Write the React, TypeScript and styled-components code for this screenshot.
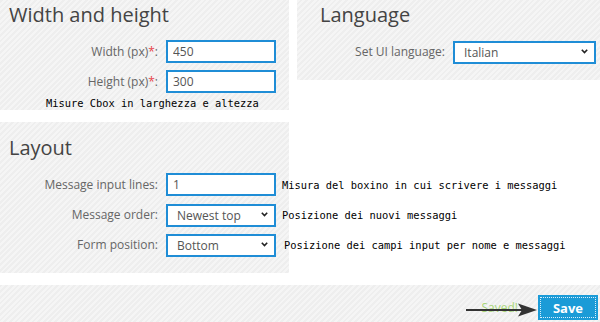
import React from "react";
import styled, { createGlobalStyle } from "styled-components";

const GlobalStyle = createGlobalStyle`
  html, body {
    margin: 0;
    padding: 0;
    background: #ffffff;
    overflow: hidden;
  }
  body {
    font-family: "Open Sans", "Liberation Sans", sans-serif;
  }
`;

const hatch = `repeating-linear-gradient(
  135deg,
  #f5f5f5 0px,
  #f5f5f5 2px,
  #eeeeee 2px,
  #eeeeee 4px
)`;

// the screenshot is cropped: panels start a little above and left of the window
const Page = styled.div`
  width: 614px;
  margin: -11px 0 0 -14px;
  display: flex;
  flex-direction: column;
  gap: 12px;
`;

const TopRow = styled.div`
  display: flex;
  align-items: flex-start;
  gap: 8px;
`;

const Panel = styled.section<{ $pb?: number }>`
  width: 303px;
  box-sizing: border-box;
  padding: 14px 4px ${(p) => (p.$pb ?? 17)}px 23px;
  background: ${hatch};
`;

const Title = styled.h2`
  margin: 0 0 13px;
  font-size: 20px;
  line-height: 24px;
  font-weight: 400;
  color: #444444;
`;

const Rows = styled.div`
  display: flex;
  flex-direction: column;
  gap: 7px;
`;

const Row = styled.div`
  display: flex;
  align-items: center;
  gap: 8px;
  height: 23px;
`;

const Label = styled.label<{ $w: number }>`
  flex: none;
  width: ${(p) => p.$w}px;
  text-align: right;
  font-size: 12px;
  color: #666666;
  white-space: nowrap;
`;

const Req = styled.span`
  color: #e8434a;
`;

const TextInput = styled.input`
  flex: none;
  box-sizing: border-box;
  width: 110px;
  height: 23px;
  margin: 0;
  padding: 0 5px;
  border: 2px solid #1f8dd6;
  background: #ffffff;
  font-family: "Open Sans", "Liberation Sans", sans-serif;
  font-size: 12px;
  color: #555555;
  outline: none;
`;

const SelectWrap = styled.div<{ $w: number }>`
  flex: none;
  position: relative;
  width: ${(p) => p.$w}px;
  height: 23px;
  svg {
    position: absolute;
    right: 8px;
    top: 9px;
    pointer-events: none;
  }
`;

const Select = styled.select`
  box-sizing: border-box;
  width: 100%;
  height: 23px;
  margin: 0;
  padding: 0 0 0 9px;
  border: 2px solid #1f8dd6;
  border-radius: 0;
  background: #ffffff;
  appearance: none;
  font-family: "Open Sans", "Liberation Sans", sans-serif;
  font-size: 12px;
  color: #555555;
  outline: none;
`;

const Note = styled.span<{ $shift?: number }>`
  flex: none;
  margin-left: ${(p) => p.$shift ?? 0}px;
  font-family: "DejaVu Sans Mono", monospace;
  font-size: 10.4px;
  color: #000000;
  white-space: nowrap;
`;

const PanelNote = styled.div`
  margin: 4px 0 0 37px;
  height: 13px;
  line-height: 13px;
  font-family: "DejaVu Sans Mono", monospace;
  font-size: 10.4px;
  color: #000000;
  white-space: nowrap;
`;

const Footer = styled.footer`
  position: relative;
  height: 40px;
  box-sizing: border-box;
  padding: 10px 2px 0 0;
  background: ${hatch};
  display: flex;
  justify-content: flex-end;
  align-items: flex-start;
  gap: 20px;
`;

const Saved = styled.span`
  margin-top: 4px;
  font-size: 12px;
  color: #a9d67a;
`;

const SaveButton = styled.button`
  width: 60px;
  height: 25px;
  padding: 0;
  border: none;
  background: #1b9bd7;
  color: #ffffff;
  font-family: "Open Sans", "Liberation Sans", sans-serif;
  font-size: 13px;
  font-weight: 700;
  outline: 1px dotted #d8eefa;
  outline-offset: -3px;
  cursor: pointer;
`;

const Arrow = styled.svg`
  position: absolute;
  right: 62px;
  top: 18px;
`;

const Chevron = () => (
  <svg width="7" height="5" viewBox="0 0 7 5">
    <path d="M0.8 0.8 L3.5 3.6 L6.2 0.8" fill="none" stroke="#222" strokeWidth="1.6" />
  </svg>
);

interface FieldProps {
  label: React.ReactNode;
  labelWidth: number;
  children: React.ReactNode;
}

const Field: React.FC<FieldProps> = ({ label, labelWidth, children }) => (
  <Row>
    <Label $w={labelWidth}>{label}</Label>
    {children}
  </Row>
);

const App: React.FC = () => {
  return (
    <>
      <GlobalStyle />
      <Page>
        <TopRow>
          <Panel $pb={0}>
            <Title>Width and height</Title>
            <Rows>
              <Field
                labelWidth={149}
                label={
                  <>
                    Width (px)<Req>*</Req>:
                  </>
                }
              >
                <TextInput defaultValue="450" />
              </Field>
              <Field
                labelWidth={149}
                label={
                  <>
                    Height (px)<Req>*</Req>:
                  </>
                }
              >
                <TextInput defaultValue="300" />
              </Field>
            </Rows>
            <PanelNote>Misure Cbox in larghezza e altezza</PanelNote>
          </Panel>
          <Panel>
            <Title>Language</Title>
            <Rows>
              <Field labelWidth={125} label="Set UI language:">
                <SelectWrap $w={143}>
                  <Select defaultValue="it">
                    <option value="it">Italian</option>
                    <option value="en">English</option>
                  </Select>
                  <Chevron />
                </SelectWrap>
              </Field>
            </Rows>
          </Panel>
        </TopRow>

        <Panel>
          <Title>Layout</Title>
          <Rows>
            <Field labelWidth={149} label="Message input lines:">
              <TextInput defaultValue="1" />
              <Note $shift={-2}>Misura del boxino in cui scrivere i messaggi</Note>
            </Field>
            <Field labelWidth={149} label="Message order:">
              <SelectWrap $w={110}>
                <Select defaultValue="top">
                  <option value="top">Newest top</option>
                  <option value="bottom">Newest bottom</option>
                </Select>
                <Chevron />
              </SelectWrap>
              <Note $shift={-2}>Posizione dei nuovi messaggi</Note>
            </Field>
            <Field labelWidth={149} label="Form position:">
              <SelectWrap $w={110}>
                <Select defaultValue="bottom">
                  <option value="bottom">Bottom</option>
                  <option value="top">Top</option>
                </Select>
                <Chevron />
              </SelectWrap>
              <Note>Posizione dei campi input per nome e messaggi</Note>
            </Field>
          </Rows>
        </Panel>

        <Footer>
          <Saved>Saved!</Saved>
          <SaveButton type="button">Save</SaveButton>
          <Arrow width="72" height="14" viewBox="0 0 72 14">
            <line x1="0" y1="7" x2="58" y2="7" stroke="#333" strokeWidth="2" />
            <polygon points="52,0.5 71,7 52,13.5 56,7" fill="#333" />
          </Arrow>
        </Footer>
      </Page>
    </>
  );
};

export default App;
